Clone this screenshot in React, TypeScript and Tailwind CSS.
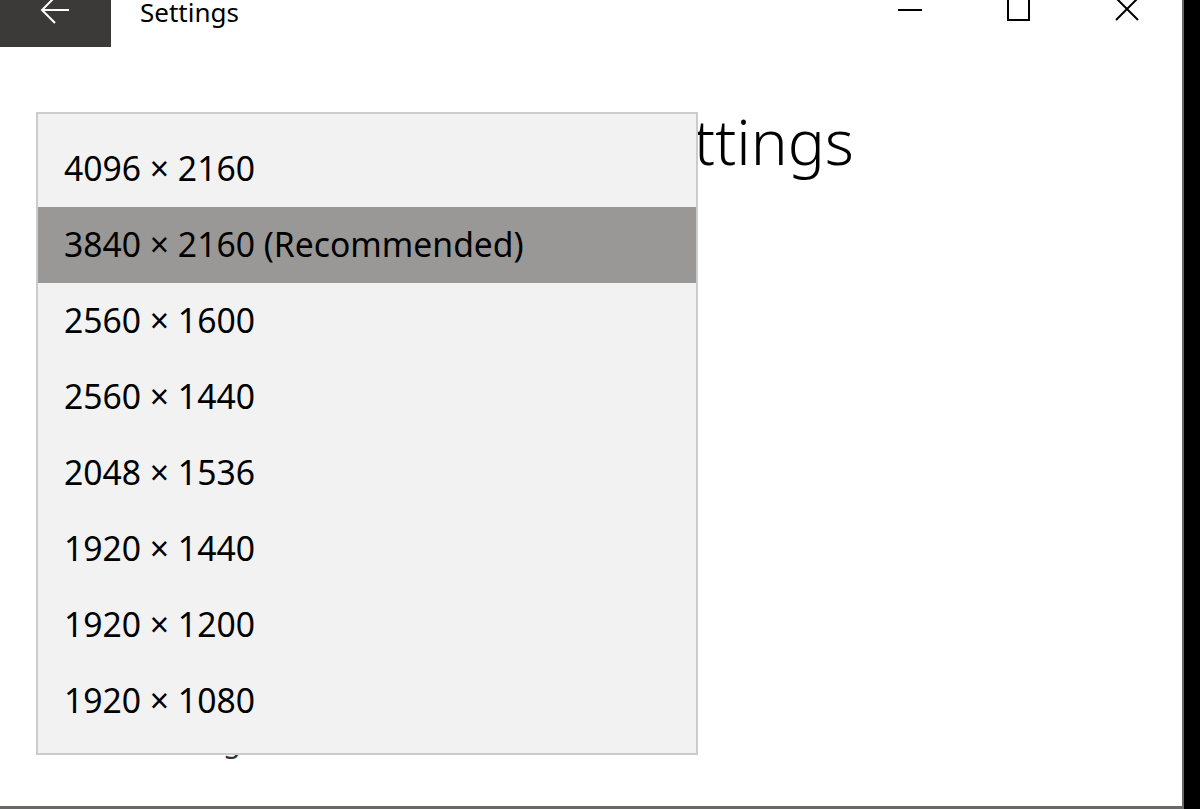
const resolutions = [
  "4096 × 2160",
  "3840 × 2160 (Recommended)",
  "2560 × 1600",
  "2560 × 1440",
  "2048 × 1536",
  "1920 × 1440",
  "1920 × 1200",
  "1920 × 1080",
];

const selected = "3840 × 2160 (Recommended)";

function BackArrow() {
  return (
    <svg width="30" height="30" viewBox="0 0 30 30" className="absolute left-[40px] top-[-5px]">
      <path d="M29 15H2M15 2L2 15l13 13" fill="none" stroke="#ffffff" strokeWidth="2" />
    </svg>
  );
}

function WindowControls() {
  return (
    <div className="ml-auto flex h-[47px]">
      <div className="relative w-[109px]">
        <svg width="26" height="4" viewBox="0 0 26 4" className="absolute left-[42px] top-[8px]">
          <path d="M1 2h24" stroke="#000" strokeWidth="2" />
        </svg>
      </div>
      <div className="relative w-[109px]">
        <svg width="26" height="26" viewBox="0 0 26 26" className="absolute left-[42px] top-[-3px]">
          <rect x="2" y="2" width="21" height="21" fill="none" stroke="#000" strokeWidth="2" />
        </svg>
      </div>
      <div className="relative w-[109px]">
        <svg width="26" height="26" viewBox="0 0 26 26" className="absolute left-[41px] top-[-4px]">
          <path d="M2 2l22 22M24 2L2 24" stroke="#000" strokeWidth="2" />
        </svg>
      </div>
    </div>
  );
}

export default function App() {
  return (
    <div className="flex h-[809px] w-[1200px] overflow-hidden bg-black" style={{ fontFamily: '"Noto Sans", sans-serif' }}>
      <div className="relative flex h-[809px] w-[1184px] flex-col overflow-hidden border-r-2 border-b-[3px] border-[#6a6866] bg-white">
        {/* title bar */}
        <div className="flex h-[47px] shrink-0 items-start">
          <div className="relative h-[47px] w-[111px] overflow-hidden bg-[#3c3a38]">
            <BackArrow />
          </div>
          <span className="ml-[29px] mt-[-1px] text-[26px] leading-[26px] text-black">Settings</span>
          <WindowControls />
        </div>

        {/* page content, mostly under the open list */}
        <div className="flex flex-col pl-[129px]">
          <h1 className="mt-[63px] text-[62px] leading-[62px] font-light whitespace-nowrap text-black">Advanced display settings</h1>
        </div>
        <div className="pl-[36px]">
          <p className="mt-[554px] text-[29px] leading-[29px] text-[#333]">Related settings</p>
        </div>

        {/* open resolution list */}
        <div className="absolute left-[36px] top-[112px] flex h-[643px] w-[662px] flex-col border-2 border-[#cccccc] bg-[#f2f2f2] pt-[17px]">
          {resolutions.map((r) => (
            <div
              key={r}
              className={`flex h-[76px] shrink-0 items-center pl-[26px] text-[33.7px] leading-none text-black ${
                r === selected ? "bg-[#9a9896]" : ""
              }`}
            >
              {r}
            </div>
          ))}
        </div>
      </div>
    </div>
  );
}
